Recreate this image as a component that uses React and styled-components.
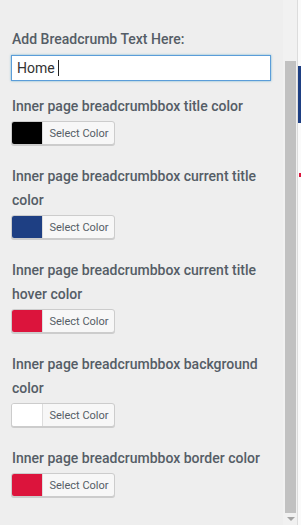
import React from "react";
import styled, { createGlobalStyle } from "styled-components";

const Global = createGlobalStyle`
  html, body { margin: 0; padding: 0; }
  body { background: #eeeeee; font-family: Roboto, "Noto Sans", Arial, sans-serif; }
`;

const Frame = styled.div`
  display: flex;
  width: 301px;
  height: 525px;
  overflow: hidden;
  background: #eeeeee;
`;

const Panel = styled.div`
  width: 283px;
  flex: none;
  box-sizing: border-box;
  padding: 27px 12px 0 11px;
  display: flex;
  flex-direction: column;
`;

const Label = styled.div`
  font-size: 14px;
  font-weight: 500;
  line-height: 24px;
  color: #555d66;
  padding-left: 1px;
`;

const Caret = styled.span`
  display: inline-block;
  width: 1px;
  height: 16px;
  background: #222;
  margin-left: 3px;
  vertical-align: middle;
`;

const FakeValue = styled.div`
  margin: 4px 0 13px;
  width: 260px;
  height: 26px;
  box-sizing: border-box;
  border: 1px solid #5b9dd9;
  box-shadow: 0 0 2px rgba(30, 140, 190, 0.6);
  background: #fff;
  font-size: 14px;
  color: #333;
  padding: 0 5px;
  display: flex;
  align-items: center;
`;

const Field = styled.div`
  display: flex;
  flex-direction: column;
  margin-bottom: 19px;
`;

const ColorButton = styled.div`
  margin-top: 3px;
  display: flex;
  width: 104px;
  height: 24px;
  box-sizing: border-box;
  border: 1px solid #cccccc;
  border-radius: 3px;
  box-shadow: 0 1px 0 #cccccc;
  background: #f7f7f7;
  overflow: hidden;
`;

const Swatch = styled.span`
  width: 30px;
  flex: none;
  background: ${p => p.color};
  border-right: 1px solid #dddddd;
`;

const ButtonText = styled.span`
  flex: 1;
  display: flex;
  align-items: center;
  justify-content: center;
  font-size: 11px;
  color: #555d66;
  padding-left: 1px;
`;

const Track = styled.div`
  width: 14px;
  flex: none;
  background: #f1f1f1;
  display: flex;
  flex-direction: column;
  align-items: center;
  padding-top: 61px;
  box-sizing: border-box;
`;

const Thumb = styled.div`
  width: 11px;
  height: 452px;
  background: #c1c1c1;
  margin-left: 1px;
`;

const Arrow = styled.div`
  margin-top: 4px;
  margin-left: 1px;
  width: 0;
  height: 0;
  border-left: 4px solid transparent;
  border-right: 4px solid transparent;
  border-top: 4px solid #a3a3a3;
`;

const Edge = styled.div`
  flex: 1;
  border-left: 1px solid #dcdcdc;
  background: #fafafa;
  display: flex;
  flex-direction: column;
  align-items: flex-end;
  padding-top: 66px;
`;

const EdgeBar = styled.div`
  width: 3px;
  height: 57px;
  background: #1e3f83;
`;

const EdgeMark = styled.div`
  margin-top: 50px;
  width: 2px;
  height: 4px;
  background: #dc143c;
`;

const fields = [
  { label: "Inner page breadcrumbbox title color", color: "#000000" },
  { label: "Inner page breadcrumbbox current title color", color: "#1e3f83" },
  { label: "Inner page breadcrumbbox current title hover color", color: "#dc143c" },
  { label: "Inner page breadcrumbbox background color", color: "#ffffff" },
  { label: "Inner page breadcrumbbox border color", color: "#dc143c" },
];

export default function App() {
  return (
    <Frame>
      <Global />
      <Panel>
        <Label>Add Breadcrumb Text Here:</Label>
        <FakeValue>
          Home<Caret />
        </FakeValue>
        {fields.map(f => (
          <Field key={f.label}>
            <Label>{f.label}</Label>
            <ColorButton>
              <Swatch color={f.color} />
              <ButtonText>Select Color</ButtonText>
            </ColorButton>
          </Field>
        ))}
      </Panel>
      <Track>
        <Thumb />
        <Arrow />
      </Track>
      <Edge>
        <EdgeBar />
        <EdgeMark />
      </Edge>
    </Frame>
  );
}
